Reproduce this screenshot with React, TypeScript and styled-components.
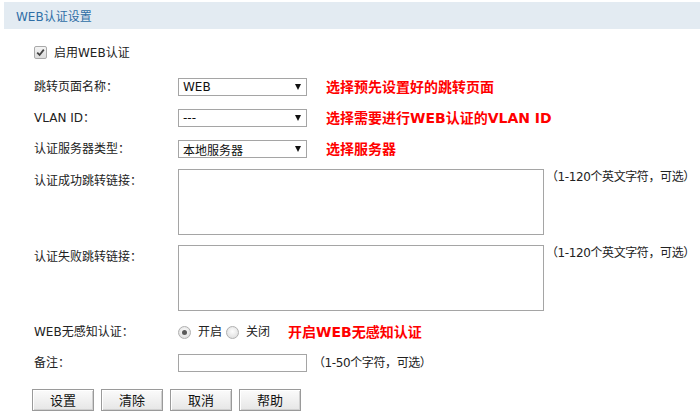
import React from 'react';
import styled, { createGlobalStyle } from 'styled-components';

const GlobalStyle = createGlobalStyle`
  html, body {
    margin: 0;
    padding: 0;
    background: #ffffff;
  }
  body {
    font-family: "DejaVu Sans", "Noto Sans CJK SC", sans-serif;
    font-size: 12px;
    color: #222;
  }
`;

const Page = styled.div`
  width: 700px;
  height: 420px;
  padding-top: 2px;
  box-sizing: border-box;
  overflow: hidden;
`;

const Header = styled.div`
  margin-left: 4px;
  height: 27px;
  background: #e3ebf2;
  display: flex;
  align-items: center;
  padding-left: 12px;
  font-size: 12px;
  color: #2f6ea6;
`;

const Form = styled.div`
  display: flex;
  flex-direction: column;
  padding-left: 34px;
`;

const Row = styled.div<{ $top: number; $align?: string }>`
  display: flex;
  align-items: ${(p) => p.$align || 'center'};
  margin-top: ${(p) => p.$top}px;
  white-space: nowrap;
`;

const Label = styled.div<{ $offset?: number }>`
  width: 144px;
  flex: none;
  line-height: 14px;
  padding-top: ${(p) => p.$offset || 0}px;
`;

const CheckBox = styled.span`
  width: 11px;
  height: 11px;
  border: 1px solid #a9a9a9;
  border-radius: 2px;
  background: linear-gradient(#f4f4f4, #dcdcdc);
  display: inline-flex;
  align-items: center;
  justify-content: center;
  margin-right: 7px;
`;

const CheckLabel = styled.span`
  line-height: 12px;
`;

const SelectBox = styled.div`
  width: 129px;
  height: 18px;
  box-sizing: border-box;
  border: 1px solid #a5a5a5;
  background: #fff;
  display: flex;
  align-items: center;
  justify-content: space-between;
  padding: 0 5px 0 4px;
  font-size: 12px;
  color: #111;
  flex: none;
`;

const Arrow = styled.span`
  width: 0;
  height: 0;
  border-left: 3.5px solid transparent;
  border-right: 3.5px solid transparent;
  border-top: 6px solid #111;
`;

const Hint = styled.span<{ $gap?: number }>`
  margin-left: ${(p) => p.$gap ?? 19}px;
  color: #ff0000;
  font-weight: bold;
  font-size: 14px;
  line-height: 14px;
`;

const TextArea = styled.div`
  width: 366px;
  height: 66px;
  box-sizing: border-box;
  border: 1px solid #a5a5a5;
  background: #fff;
  flex: none;
`;

const Note = styled.span<{ $gap: number; $offset?: number }>`
  margin-left: ${(p) => p.$gap}px;
  padding-top: ${(p) => p.$offset || 0}px;
  line-height: 14px;
  color: #222;
  white-space: nowrap;
  letter-spacing: -0.4px;
`;

const Radio = styled.span<{ $checked?: boolean }>`
  width: 11px;
  height: 11px;
  border-radius: 50%;
  border: 1px solid #b0b0b0;
  background: radial-gradient(circle at 50% 40%, #fdfdfd, #d8d8d8);
  display: inline-flex;
  align-items: center;
  justify-content: center;
  margin-right: 7px;
  flex: none;
  &::after {
    content: '';
    display: ${(p) => (p.$checked ? 'block' : 'none')};
    width: 5px;
    height: 5px;
    border-radius: 50%;
    background: #5a5a5a;
  }
`;

const RadioText = styled.span`
  margin-right: 4px;
  line-height: 14px;
`;

const TextInput = styled.div`
  width: 129px;
  height: 18px;
  box-sizing: border-box;
  border: 1px solid #a5a5a5;
  background: #fff;
  flex: none;
`;

const Buttons = styled.div`
  display: flex;
  gap: 7px;
  margin-top: 17px;
  margin-left: -2px;
`;

const Button = styled.button`
  width: 62px;
  height: 22px;
  box-sizing: border-box;
  padding: 0;
  border: 1px solid #9a9a9a;
  border-radius: 0;
  box-shadow: inset 1px 1px 0 #ffffff, inset -1px -1px 0 #d0d0d0;
  background: linear-gradient(#fbfbfb, #e6e6e6);
  font-family: "Noto Sans CJK SC", sans-serif;
  font-size: 13px;
  color: #111;
  line-height: 18px;
`;

const App: React.FC = () => {
  return (
    <Page>
      <GlobalStyle />
      <Header>WEB认证设置</Header>
      <Form>
        <Row $top={17}>
          <CheckBox>
            <svg width="9" height="9" viewBox="0 0 9 9">
              <path d="M1.2 4.6 L3.6 7 L7.8 1.6" fill="none" stroke="#444" strokeWidth="1.8" />
            </svg>
          </CheckBox>
          <CheckLabel>启用WEB认证</CheckLabel>
        </Row>

        <Row $top={19}>
          <Label>跳转页面名称：</Label>
          <SelectBox>
            WEB
            <Arrow />
          </SelectBox>
          <Hint>选择预先设置好的跳转页面</Hint>
        </Row>

        <Row $top={13}>
          <Label>VLAN ID：</Label>
          <SelectBox>
            ---
            <Arrow />
          </SelectBox>
          <Hint>选择需要进行WEB认证的VLAN ID</Hint>
        </Row>

        <Row $top={13}>
          <Label>认证服务器类型：</Label>
          <SelectBox>
            本地服务器
            <Arrow />
          </SelectBox>
          <Hint>选择服务器</Hint>
        </Row>

        <Row $top={11} $align="flex-start">
          <Label $offset={5}>认证成功跳转链接：</Label>
          <TextArea />
          <Note $gap={2} $offset={1}>（1-120个英文字符，可选）</Note>
        </Row>

        <Row $top={10} $align="flex-start">
          <Label $offset={5}>认证失败跳转链接：</Label>
          <TextArea />
          <Note $gap={2} $offset={1}>（1-120个英文字符，可选）</Note>
        </Row>

        <Row $top={14}>
          <Label>WEB无感知认证：</Label>
          <Radio $checked />
          <RadioText>开启</RadioText>
          <Radio />
          <RadioText>关闭</RadioText>
          <Hint $gap={14}>开启WEB无感知认证</Hint>
        </Row>

        <Row $top={15}>
          <Label>备注：</Label>
          <TextInput />
          <Note $gap={6}>（1-50个字符，可选）</Note>
        </Row>

        <Buttons>
          <Button>设置</Button>
          <Button>清除</Button>
          <Button>取消</Button>
          <Button>帮助</Button>
        </Buttons>
      </Form>
    </Page>
  );
};

export default App;
